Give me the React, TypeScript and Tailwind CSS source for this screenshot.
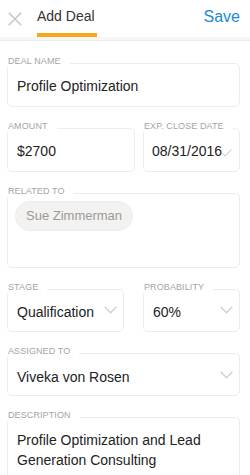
import * as React from "react"

const font = { fontFamily: '"Liberation Sans", Arial, sans-serif' }

function Chevron() {
  return (
    <svg width="13" height="8" viewBox="0 0 13 8" className="mt-[4px] shrink-0" fill="none">
      <polyline points="0.7,0.7 6.5,6.8 12.3,0.7" stroke="#cfcfcf" strokeWidth="1.3" />
    </svg>
  )
}

function Field({
  label,
  className = "",
  boxClass = "",
  children,
}: {
  label: string
  className?: string
  boxClass?: string
  children: React.ReactNode
}) {
  return (
    <div className={className}>
      <div className="relative z-10 -mb-[4px] w-fit bg-white pl-px pr-[9px] text-[9px] leading-[12px] tracking-[0.1px] text-[#a4a4a4] uppercase whitespace-nowrap">
        {label}
      </div>
      <div className={"rounded-[5px] border border-[#ececec] " + boxClass}>{children}</div>
    </div>
  )
}

export default function App() {
  const [name] = React.useState("Profile Optimization")

  return (
    <div className="h-[475px] w-[250px] overflow-hidden bg-white" style={font}>
      {/* Header */}
      <div className="flex h-[37px] items-stretch">
        <div className="w-[37px] shrink-0 pl-[8px] pt-[12px]">
          <svg width="14" height="14" viewBox="0 0 14 14" fill="none">
            <path d="M0.8 0.8 L13.2 13.2 M13.2 0.8 L0.8 13.2" stroke="#c6c6c6" strokeWidth="1.6" />
          </svg>
        </div>
        <div className="flex w-[60px] flex-col justify-between pt-[6px]">
          <span className="text-[14px] leading-[20px] text-[#333] whitespace-nowrap">Add Deal</span>
          <div className="h-[4px] bg-[#f8a81b]" />
        </div>
        <button className="ml-auto self-start pr-[10px] pt-[7px] text-[16px] leading-[20px] text-[#2189d6]">
          Save
        </button>
      </div>
      <div className="h-[4px] border-b border-[#ebebeb] bg-[#f6f6f6]" />

      {/* Form */}
      <div className="flex flex-col gap-[13px] pl-[7px] pr-[10px] pt-[14px] text-[14px] leading-[20px] text-[#222]">
        <Field label="Deal Name" boxClass="px-[9px] pt-[12px] pb-[10px]">
          {name}
        </Field>

        <div className="flex gap-[8px]">
          <Field label="Amount" className="flex-1" boxClass="px-[9px] pt-[12px] pb-[10px]">
            $2700
          </Field>
          <Field label="Exp. Close Date" className="w-[97px]" boxClass="flex items-end pl-[8px] pt-[12px] pb-[10px]">
            <span>08/31/2016</span>
            <svg width="10" height="8" viewBox="0 0 10 8" className="mb-[4px] shrink-0" fill="none">
              <polyline points="0.5,4 3,7 9.5,0.6" stroke="#d0d0d0" strokeWidth="1.1" />
            </svg>
          </Field>
        </div>

        <Field label="Related To" boxClass="h-[75px] pl-[7px] pt-[7px]">
          <span className="inline-block rounded-full border border-[#eeece9] bg-[#f3f2f0] px-[10px] text-[13px] leading-[28px] text-[#999]">
            Sue Zimmerman
          </span>
        </Field>

        <div className="flex justify-between">
          <Field label="Stage" className="w-[117px]" boxClass="flex items-start justify-between pl-[9px] pr-[6px] pt-[12px] pb-[9px]">
            <span>Qualification</span>
            <Chevron />
          </Field>
          <Field label="Probability" className="w-[97px]" boxClass="flex items-start justify-between pl-[9px] pr-[6px] pt-[12px] pb-[9px]">
            <span>60%</span>
            <Chevron />
          </Field>
        </div>

        <Field label="Assigned To" boxClass="flex items-start justify-between pl-[9px] pr-[6px] pt-[13px] pb-[8px]">
          <span>Viveka von Rosen</span>
          <Chevron />
        </Field>

        <Field label="Description" boxClass="px-[9px] pt-[12px] pb-[12px]">
          Profile Optimization and Lead Generation Consulting
        </Field>
      </div>
    </div>
  )
}
